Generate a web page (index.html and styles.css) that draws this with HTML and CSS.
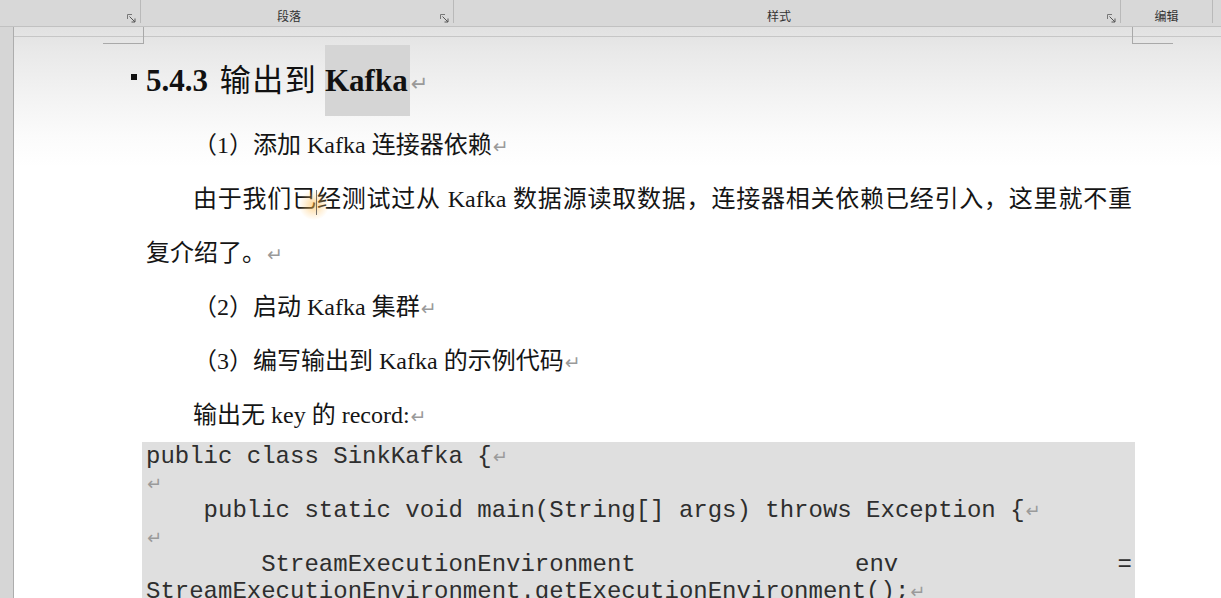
FILE: index.html
```html
<!DOCTYPE html>
<html lang="zh-CN">
<head>
<meta charset="utf-8">
<title>5.4.3 输出到 Kafka</title>
<link rel="stylesheet" href="styles.css">
</head>
<body>
<div class="app">
  <div class="ribbon">
    <div class="rgroup g0">
      <span class="launch"><svg width="9" height="9" viewBox="0 0 9 9"><path d="M0.5 5 V0.5 H5" fill="none" stroke="#777" stroke-width="1"/><path d="M2.5 2.5 L8 8 M8 4.5 V8 H4.5" fill="none" stroke="#555" stroke-width="1"/></svg></span>
    </div>
    <div class="rgroup g1">
      <span class="rlabel">段落</span>
      <span class="launch"><svg width="9" height="9" viewBox="0 0 9 9"><path d="M0.5 5 V0.5 H5" fill="none" stroke="#777" stroke-width="1"/><path d="M2.5 2.5 L8 8 M8 4.5 V8 H4.5" fill="none" stroke="#555" stroke-width="1"/></svg></span>
    </div>
    <div class="rgroup g2">
      <span class="rlabel">样式</span>
      <span class="launch"><svg width="9" height="9" viewBox="0 0 9 9"><path d="M0.5 5 V0.5 H5" fill="none" stroke="#777" stroke-width="1"/><path d="M2.5 2.5 L8 8 M8 4.5 V8 H4.5" fill="none" stroke="#555" stroke-width="1"/></svg></span>
    </div>
    <div class="rgroup g3">
      <span class="rlabel">编辑</span>
    </div>
    <div class="rgroup g4"></div>
  </div>

  <div class="workspace">
    <div class="vruler"></div>
    <div class="page">
      <div class="page-top"></div>
      <div class="mark mark-left"></div>
      <div class="mark mark-right"></div>

      <div class="body-text">
        <h2 class="heading"><span class="bullet"></span>5.4.3 <span class="cjk">输出到</span> <span class="hl">Kafka</span><span class="pm">↵</span></h2>

        <p class="para first indent">（1）添加 Kafka 连接器依赖<span class="pm">↵</span></p>

        <p class="para">
          <span class="line justify indent">由于我们已经测试过从 Kafka 数据源读取数据，连接器相关依赖已经引入，这里就不重</span>
          <span class="line">复介绍了。<span class="pm">↵</span></span>
        </p>

        <p class="para indent">（2）启动 Kafka 集群<span class="pm">↵</span></p>

        <p class="para indent">（3）编写输出到 Kafka 的示例代码<span class="pm">↵</span></p>

        <p class="para indent">输出无 key 的 record:<span class="pm">↵</span></p>

        <div class="code">
          <div class="cl">public class SinkKafka {<span class="pm">↵</span></div>
          <div class="cl"><span class="pm">↵</span></div>
          <div class="cl">    public static void main(String[] args) throws Exception {<span class="pm">↵</span></div>
          <div class="cl"><span class="pm">↵</span></div>
          <div class="cl spread"><span>        StreamExecutionEnvironment</span><span>env</span><span>=</span></div>
          <div class="cl">StreamExecutionEnvironment.getExecutionEnvironment();<span class="pm">↵</span></div>
        </div>
      </div>

      <div class="click-glow"></div>
      <div class="caret"></div>
    </div>
  </div>
</div>
</body>
</html>
```

FILE: styles.css
```css
* { box-sizing: border-box; }

html, body {
  margin: 0;
  padding: 0;
  background: #ffffff;
}

.app {
  width: 1221px;
  height: 598px;
  overflow: hidden;
  display: flex;
  flex-direction: column;
  font-family: "Liberation Serif", "Noto Sans CJK SC", serif;
  color: #151515;
}

/* ---------- ribbon ---------- */
.ribbon {
  flex: 0 0 27px;
  height: 27px;
  display: flex;
  align-items: flex-start;
  background: #d8d8d8;
  border-bottom: 1px solid #c1c1c1;
}

.rgroup {
  position: relative;
  height: 23px;
  display: flex;
  align-items: flex-end;
  justify-content: center;
  border-right: 1px solid #b9b9b9;
  padding-bottom: 0;
}

.g0 { width: 141px; }
.g1 { width: 313px; padding-right: 16px; }
.g2 { width: 667px; padding-right: 16px; }
.g3 { width: 92px; }
.g4 { flex: 1; border-right: none; }

.rlabel {
  font-family: "Noto Sans CJK SC", sans-serif;
  font-size: 12px;
  line-height: 14px;
  color: #333333;
}

.launch {
  position: absolute;
  right: 4px;
  bottom: 0;
  width: 9px;
  height: 9px;
  display: block;
  line-height: 0;
}

/* ---------- workspace ---------- */
.workspace {
  flex: 1;
  display: flex;
  min-height: 0;
}

.vruler {
  flex: 0 0 14px;
  background: #d6d6d6;
  border-right: 1px solid #adadad;
}

.page {
  flex: 1;
  position: relative;
  background: linear-gradient(to bottom, #e1e1e1 0px, #e9e9e9 25px, #f3f3f3 70px, #fbfbfb 110px, #ffffff 140px);
}

.page-top {
  height: 10px;
  border-bottom: 1px solid #c6c6c6;
}

.mark {
  position: absolute;
  top: 0;
  width: 41px;
  height: 17px;
  border-bottom: 1px solid #a9a9a9;
}
.mark-left { left: 89px; border-right: 1px solid #a9a9a9; }
.mark-right { left: 1118px; border-left: 1px solid #a9a9a9; }

/* ---------- text ---------- */
.body-text {
  padding: 5px 89px 0 132px;
}

.heading {
  margin: 0;
  height: 71px;
  font-size: 31px;
  line-height: 71px;
  font-weight: bold;
  white-space: nowrap;
  color: #111111;
}

.heading .cjk {
  font-weight: normal;
  font-family: "Noto Sans CJK SC", sans-serif;
  margin-left: 4px;
  letter-spacing: 1.5px;
}

.bullet {
  display: inline-block;
  width: 6px;
  height: 6px;
  background: #111111;
  margin-left: -15px;
  margin-right: 9px;
  vertical-align: 11px;
}

.hl {
  display: inline-block;
  height: 71px;
  line-height: 71px;
  background: #d5d5d5;
  padding-right: 2px;
}

.pm {
  font-family: "DejaVu Sans", sans-serif;
  font-weight: normal;
  font-size: 19px;
  line-height: 0;
  color: #9a9a9a;
  margin-left: 1px;
}

.heading .pm { font-size: 21px; }

.para {
  margin: 0;
  font-size: 24px;
  line-height: 54px;
  white-space: nowrap;
}

.para.first { margin-top: 5px; }

.indent { text-indent: 47px; }

.line { display: block; }

.line.justify {
  text-align: justify;
  text-align-last: justify;
  text-justify: inter-character;
}

/* ---------- code ---------- */
.code {
  margin: 0 -3px 0 -4px;
  padding: 1px 3px 0 4px;
  background: #dfdfdf;
  font-family: "Liberation Mono", "Courier New", monospace;
  font-size: 24px;
  line-height: 27px;
  color: #2e2e2e;
  height: 200px;
}

.cl {
  white-space: pre;
  height: 27px;
}

.cl .pm { font-size: 18px; }

.cl.spread {
  display: flex;
  justify-content: space-between;
}

/* ---------- recording overlay ---------- */
.click-glow {
  position: absolute;
  left: 285px;
  top: 163px;
  width: 30px;
  height: 30px;
  border-radius: 50%;
  background: radial-gradient(circle, rgba(255, 180, 60, 0.55) 0%, rgba(255, 200, 110, 0.25) 45%, rgba(255, 220, 150, 0) 72%);
}

.caret {
  position: absolute;
  left: 302px;
  top: 163px;
  width: 1px;
  height: 25px;
  background: rgba(60, 60, 60, 0.7);
}
```
